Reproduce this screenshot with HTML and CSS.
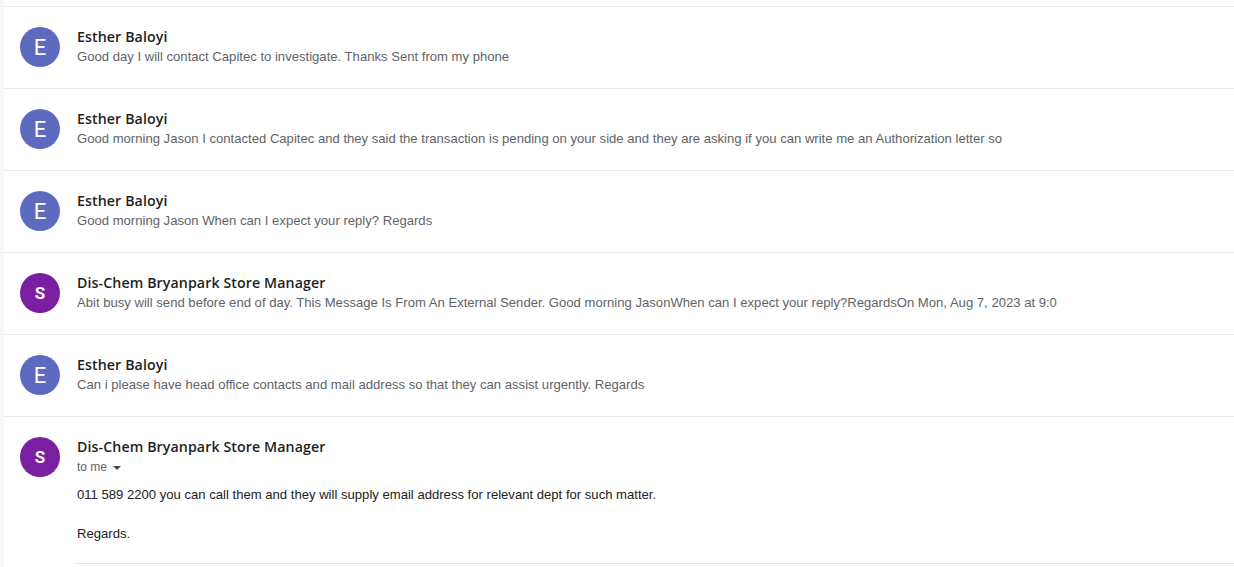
FILE: index.html
```html
<!DOCTYPE html>
<html lang="en">
<head>
<meta charset="utf-8">
<title>Thread</title>
<link rel="stylesheet" href="styles.css">
</head>
<body>
<div class="thread">
  <div class="msg">
    <div class="avatar av-e">E</div>
    <div class="content">
      <div class="name">Esther Baloyi</div>
      <div class="snippet">Good day I will contact Capitec to investigate. Thanks Sent from my phone</div>
    </div>
  </div>
  <div class="msg">
    <div class="avatar av-e">E</div>
    <div class="content">
      <div class="name">Esther Baloyi</div>
      <div class="snippet">Good morning Jason I contacted Capitec and they said the transaction is pending on your side and they are asking if you can write me an Authorization letter so</div>
    </div>
  </div>
  <div class="msg">
    <div class="avatar av-e">E</div>
    <div class="content">
      <div class="name">Esther Baloyi</div>
      <div class="snippet">Good morning Jason When can I expect your reply? Regards</div>
    </div>
  </div>
  <div class="msg">
    <div class="avatar av-s">S</div>
    <div class="content">
      <div class="name">Dis-Chem Bryanpark Store Manager</div>
      <div class="snippet">Abit busy will send before end of day. This Message Is From An External Sender. Good morning JasonWhen can I expect your reply?RegardsOn Mon, Aug 7, 2023 at 9:0</div>
    </div>
  </div>
  <div class="msg">
    <div class="avatar av-e">E</div>
    <div class="content">
      <div class="name">Esther Baloyi</div>
      <div class="snippet">Can i please have head office contacts and mail address so that they can assist urgently. Regards</div>
    </div>
  </div>
  <div class="msg msg-open">
    <div class="avatar av-s">S</div>
    <div class="content">
      <div class="name">Dis-Chem Bryanpark Store Manager</div>
      <div class="to">to me <svg class="caret" width="10" height="6" viewBox="0 0 10 6"><path d="M1 1h8L5 5z" fill="#444"/></svg></div>
      <div class="body">
        <p>011 589 2200 you can call them and they will supply email address for relevant dept for such matter.</p>
        <p>Regards.</p>
      </div>
      <div class="rule"></div>
    </div>
  </div>
</div>
</body>
</html>
```
FILE: styles.css
```css
html, body {
  margin: 0;
  padding: 0;
  background: #ffffff;
}
body {
  height: 567px;
  overflow: hidden;
}
.thread {
  border-left: 4px solid #f7f7f7;
  padding-top: 6px;
  height: 561px;
  font-family: "Liberation Sans", Arial, sans-serif;
}
.msg {
  display: flex;
  gap: 17px;
  height: 82px;
  box-sizing: border-box;
  border-top: 1px solid #ebebeb;
  padding: 20px 0 0 16px;
}
.msg-open {
  height: auto;
}
.avatar {
  width: 40px;
  height: 40px;
  border-radius: 50%;
  flex: none;
  display: flex;
  align-items: center;
  justify-content: center;
  color: #ffffff;
  font-family: Roboto, "Liberation Sans", sans-serif;
}
.av-e {
  background: #5c6bc0;
  font-size: 22px;
}
.av-s {
  background: #7b1fa2;
  font-size: 17px;
  font-weight: 700;
}
.content {
  flex: 1;
  min-width: 0;
}
.name {
  font-family: "Open Sans", Roboto, sans-serif;
  font-weight: 600;
  font-size: 14.2px;
  line-height: 20px;
  color: #1f1f1f;
  letter-spacing: 0.1px;
}
.snippet {
  font-size: 13.1px;
  line-height: 20px;
  color: #5f6368;
  white-space: nowrap;
}
.to {
  font-size: 12px;
  line-height: 20px;
  color: #5f6368;
  display: flex;
  align-items: center;
  gap: 5px;
}
.caret {
  margin-top: 1px;
}
.body {
  margin-top: 8px;
  font-size: 13.1px;
  color: #222222;
}
.body p {
  margin: 0 0 19px 0;
  line-height: 20px;
}
.body p:last-child {
  margin-bottom: 0;
}
.rule {
  margin-top: 19px;
  border-top: 1px solid #e3e3e3;
}
```
